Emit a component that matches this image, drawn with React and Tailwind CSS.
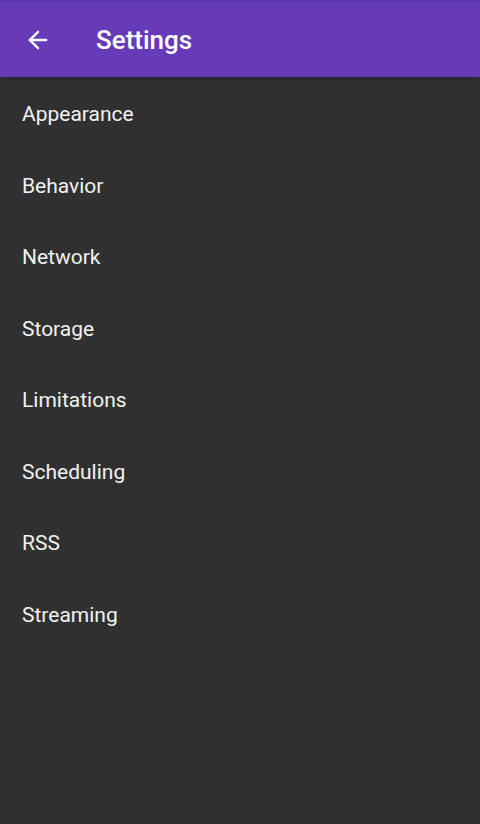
import { ArrowLeft } from 'lucide-react'

const items = ['Appearance', 'Behavior', 'Network', 'Storage', 'Limitations', 'Scheduling', 'RSS', 'Streaming']

export default function App() {
  return (
    <div className="min-h-[824px] bg-[#303030] font-['Roboto',sans-serif]">
      <div className="h-[2px] bg-[#5b34a8]" />
      <header className="h-[75px] bg-[#673ab7] flex items-center shadow-md">
        <button className="w-[74px] flex items-center justify-center pl-[1px] pt-[1px] text-white">
          <ArrowLeft size={28} strokeWidth={2.1} />
        </button>
        <h1 className="text-white text-[26px] font-medium ml-[22px] pt-[2px]">Settings</h1>
      </header>
      <ul className="pt-[2px]">
        {items.map((item) => (
          <li key={item} className="h-[71.5px] flex items-center px-[22px] text-[21px] text-[#f2f2f2]">
            {item}
          </li>
        ))}
      </ul>
    </div>
  )
}
